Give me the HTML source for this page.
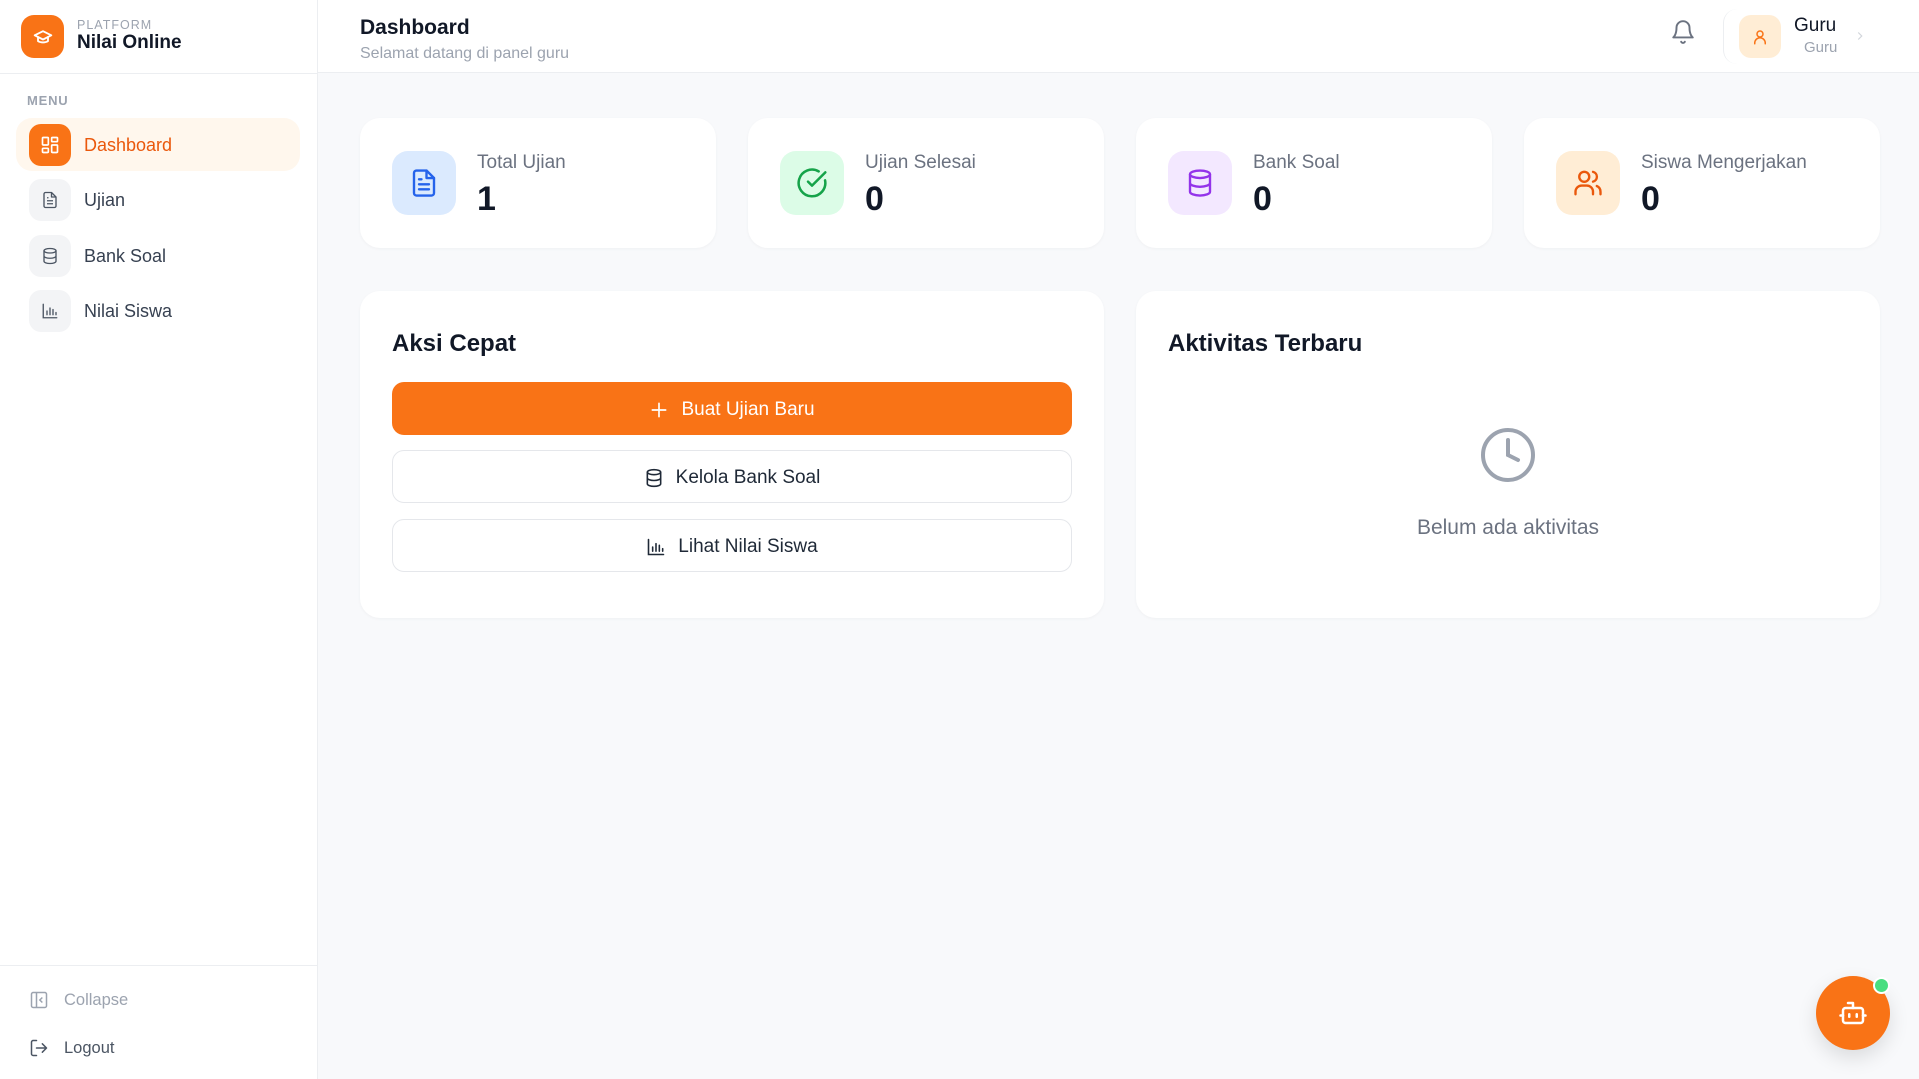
<!DOCTYPE html>
<html><head><meta charset="utf-8">
<style>
*{box-sizing:border-box;margin:0;padding:0}
body{width:1919px;height:1079px;overflow:hidden;background:#f8f9fb;font-family:"Liberation Sans",sans-serif;color:#111827;position:relative}
.abs{position:absolute}
.side{left:0;top:0;width:318px;height:1079px;background:#fff;border-right:1px solid #eceef1}
.hdr{left:318px;top:0;right:0;height:73px;background:#fff;border-bottom:1px solid #eceef1}
.card{background:#fff;border-radius:20px;box-shadow:0 1px 3px rgba(0,0,0,.04)}
.ib{width:42px;height:42px;border-radius:12px;background:#f3f4f6;display:flex;align-items:center;justify-content:center}
.nav{position:absolute;left:29px;display:flex;align-items:center;font-size:18px;color:#374151}
.nav .ib{margin-right:13px}
.stat .ico{position:absolute;left:32px;top:33px;width:64px;height:64px;border-radius:16px;display:flex;align-items:center;justify-content:center}
.stat .lbl{position:absolute;left:117px;top:34px;font-size:19px;color:#6b7280}
.stat .num{position:absolute;left:117px;top:62px;font-size:34px;font-weight:bold;color:#111827}
.btn{position:absolute;left:32px;width:680px;height:53px;border-radius:12px;display:flex;align-items:center;justify-content:center;font-size:19px;gap:12px;padding-top:2px}
.ob{background:#fff;border:1px solid #e5e7eb;color:#1f2937}
</style></head><body>
<div class="abs side">
  <div class="abs" style="left:0;top:73px;width:317px;border-top:1px solid #eceef1"></div>
  <div class="abs" style="left:21px;top:15px;width:43px;height:43px;border-radius:13px;background:#f97316;display:flex;align-items:center;justify-content:center">
    <svg width="20" height="20" viewBox="0 0 24 24" fill="none" stroke="#fff" stroke-width="2.2" stroke-linecap="round" stroke-linejoin="round"><path d="M2 10l10-5 10 5-10 5z"/><path d="M6 12v5c3 2 9 2 12 0v-5"/></svg>
  </div>
  <div class="abs" style="left:77px;top:18px;font-size:12.5px;letter-spacing:1px;color:#9ca3af">PLATFORM</div>
  <div class="abs" style="left:77px;top:32px;font-size:19px;font-weight:bold;color:#111827">Nilai Online</div>
  <div class="abs" style="left:27px;top:93px;font-size:13px;font-weight:bold;letter-spacing:.8px;color:#9ca3af">MENU</div>
  <div class="abs" style="left:16px;top:118px;width:284px;height:53px;border-radius:16px;background:#fff7ed"></div>
  <div class="nav" style="top:124px;color:#ea580c">
    <div class="ib" style="background:#f97316"><svg width="20" height="20" viewBox="0 0 24 24" fill="none" stroke="#fff" stroke-width="2"><rect x="3" y="3" width="7" height="9" rx="1"/><rect x="14" y="3" width="7" height="5" rx="1"/><rect x="14" y="12" width="7" height="9" rx="1"/><rect x="3" y="16" width="7" height="5" rx="1"/></svg></div>Dashboard</div>
  <div class="nav" style="top:179px"><div class="ib"><svg width="18" height="18" viewBox="0 0 24 24" fill="none" stroke="#4b5563" stroke-width="1.8" stroke-linejoin="round"><path d="M14 2H6a2 2 0 0 0-2 2v16a2 2 0 0 0 2 2h12a2 2 0 0 0 2-2V8z"/><path d="M14 2v6h6M8 13h8M8 17h8M8 9h2"/></svg></div>Ujian</div>
  <div class="nav" style="top:235px"><div class="ib"><svg width="18" height="18" viewBox="0 0 24 24" fill="none" stroke="#4b5563" stroke-width="1.8"><ellipse cx="12" cy="5" rx="8" ry="3"/><path d="M4 5v14c0 1.7 3.6 3 8 3s8-1.3 8-3V5M4 12c0 1.7 3.6 3 8 3s8-1.3 8-3"/></svg></div>Bank Soal</div>
  <div class="nav" style="top:290px"><div class="ib"><svg width="18" height="18" viewBox="0 0 24 24" fill="none" stroke="#4b5563" stroke-width="1.8" stroke-linecap="round"><path d="M3 3v18h18M8 17v-5M12 17V8M16 17v-7M20 17v-3"/></svg></div>Nilai Siswa</div>
  <div class="abs" style="left:0;top:965px;width:317px;border-top:1px solid #eceef1"></div>
  <div class="abs" style="left:29px;top:990px;display:flex;align-items:center;font-size:16.5px;color:#9ca3af"><svg width="20" height="20" viewBox="0 0 24 24" fill="none" stroke="#9ca3af" stroke-width="1.8" style="margin-right:15px"><rect x="3" y="3" width="18" height="18" rx="2"/><path d="M9 3v18M16 9l-3 3 3 3"/></svg>Collapse</div>
  <div class="abs" style="left:29px;top:1038px;display:flex;align-items:center;font-size:16.5px;color:#4b5563"><svg width="20" height="20" viewBox="0 0 24 24" fill="none" stroke="#4b5563" stroke-width="1.8" stroke-linecap="round" stroke-linejoin="round" style="margin-right:15px"><path d="M9 21H5a2 2 0 0 1-2-2V5a2 2 0 0 1 2-2h4M16 17l5-5-5-5M21 12H9"/></svg>Logout</div>
</div>
<div class="abs hdr">
  <div class="abs" style="left:42px;top:16px;font-size:21px;font-weight:bold">Dashboard</div>
  <div class="abs" style="left:42px;top:45px;font-size:16px;color:#9ca3af">Selamat datang di panel guru</div>
  <svg class="abs" style="left:1352px;top:19px" width="26" height="26" viewBox="0 0 24 24" fill="none" stroke="#6b7280" stroke-width="1.8" stroke-linecap="round" stroke-linejoin="round"><path d="M6 8a6 6 0 0 1 12 0c0 7 3 9 3 9H3s3-2 3-9M10.3 21a1.9 1.9 0 0 0 3.4 0"/></svg>
  <div class="abs" style="left:1405px;top:9px;width:40px;height:55px;border-left:1px solid #eceef1;border-radius:14px 0 0 14px"></div>
  <div class="abs" style="left:1421px;top:15px;width:42px;height:43px;border-radius:12px;background:#ffedd5;display:flex;align-items:center;justify-content:center"><svg width="18" height="18" viewBox="0 0 24 24" fill="none" stroke="#f97316" stroke-width="2" stroke-linecap="round"><circle cx="12" cy="8" r="4"/><path d="M5 21v-1a7 7 0 0 1 14 0v1"/></svg></div>
  <div class="abs" style="left:1476px;top:15px;font-size:19px;color:#111827">Guru</div>
  <div class="abs" style="left:1486px;top:39px;font-size:15px;color:#9ca3af">Guru</div>
  <svg class="abs" style="left:1535px;top:28px" width="14" height="16" viewBox="0 0 24 24" fill="none" stroke="#d1d5db" stroke-width="2"><path d="M9 6l6 6-6 6"/></svg>
</div>

<div class="abs card stat" style="left:360px;top:118px;width:356px;height:130px">
  <div class="ico" style="background:#dbeafe"><svg width="30" height="30" viewBox="0 0 24 24" fill="none" stroke="#2563eb" stroke-width="1.9" stroke-linejoin="round" stroke-linecap="round"><path d="M14 2H6a2 2 0 0 0-2 2v16a2 2 0 0 0 2 2h12a2 2 0 0 0 2-2V8z"/><path d="M14 2v6h6M8 13h8M8 17h8M8 9h2"/></svg></div>
  <div class="lbl">Total Ujian</div><div class="num">1</div></div>
<div class="abs card stat" style="left:748px;top:118px;width:356px;height:130px">
  <div class="ico" style="background:#dcfce7"><svg width="32" height="32" viewBox="0 0 24 24" fill="none" stroke="#16a34a" stroke-width="1.9" stroke-linecap="round" stroke-linejoin="round"><path d="M21.8 10A10 10 0 1 1 17 3.3"/><path d="M9 11l3 3L22 4"/></svg></div>
  <div class="lbl">Ujian Selesai</div><div class="num">0</div></div>
<div class="abs card stat" style="left:1136px;top:118px;width:356px;height:130px">
  <div class="ico" style="background:#f3e8ff"><svg width="30" height="30" viewBox="0 0 24 24" fill="none" stroke="#9333ea" stroke-width="1.9"><ellipse cx="12" cy="5" rx="8" ry="3"/><path d="M4 5v14c0 1.7 3.6 3 8 3s8-1.3 8-3V5M4 12c0 1.7 3.6 3 8 3s8-1.3 8-3"/></svg></div>
  <div class="lbl">Bank Soal</div><div class="num">0</div></div>
<div class="abs card stat" style="left:1524px;top:118px;width:356px;height:130px">
  <div class="ico" style="background:#ffedd5"><svg width="30" height="30" viewBox="0 0 24 24" fill="none" stroke="#ea580c" stroke-width="1.9" stroke-linecap="round"><circle cx="9" cy="7" r="4"/><path d="M2 21v-2a5 5 0 0 1 5-5h4a5 5 0 0 1 5 5v2M16 3.1a4 4 0 0 1 0 7.8M22 21v-2a5 5 0 0 0-3-4.6"/></svg></div>
  <div class="lbl">Siswa Mengerjakan</div><div class="num">0</div></div>

<div class="abs card" style="left:360px;top:291px;width:744px;height:327px">
  <div class="abs" style="left:32px;top:39px;font-size:24px;font-weight:bold">Aksi Cepat</div>
  <div class="btn" style="top:91px;background:#f97316;color:#fff"><svg width="20" height="20" viewBox="0 0 24 24" fill="none" stroke="#fff" stroke-width="2" stroke-linecap="round"><path d="M12 4v16M4 12h16"/></svg>Buat Ujian Baru</div>
  <div class="btn ob" style="top:159px"><svg width="20" height="20" viewBox="0 0 24 24" fill="none" stroke="#1f2937" stroke-width="1.9"><ellipse cx="12" cy="5" rx="8" ry="3"/><path d="M4 5v14c0 1.7 3.6 3 8 3s8-1.3 8-3V5M4 12c0 1.7 3.6 3 8 3s8-1.3 8-3"/></svg>Kelola Bank Soal</div>
  <div class="btn ob" style="top:228px"><svg width="20" height="20" viewBox="0 0 24 24" fill="none" stroke="#1f2937" stroke-width="1.9" stroke-linecap="round"><path d="M3 3v18h18M8 17v-5M12 17V8M16 17v-7M20 17v-3"/></svg>Lihat Nilai Siswa</div>
</div>
<div class="abs card" style="left:1136px;top:291px;width:744px;height:327px">
  <div class="abs" style="left:32px;top:39px;font-size:24px;font-weight:bold">Aktivitas Terbaru</div>
  <svg class="abs" style="left:342px;top:134px" width="60" height="60" viewBox="0 0 24 24" fill="none" stroke="#9ca3af" stroke-width="1.6" stroke-linecap="round"><circle cx="12" cy="12" r="10"/><path d="M12 6v6l4 2"/></svg>
  <div class="abs" style="left:0;width:744px;top:225px;text-align:center;font-size:21px;color:#6b7280">Belum ada aktivitas</div>
</div>

<div class="abs" style="left:1816px;top:976px;width:74px;height:74px;border-radius:50%;background:#f97316;box-shadow:0 8px 20px rgba(0,0,0,.12);display:flex;align-items:center;justify-content:center">
  <svg width="30" height="30" viewBox="0 0 24 24" fill="none" stroke="#fff" stroke-width="2" stroke-linecap="round" stroke-linejoin="round"><path d="M12 8V4H8"/><rect x="4" y="8" width="16" height="12" rx="2"/><path d="M2 14h2M20 14h2M15 13v2M9 13v2"/></svg>
</div>
<div class="abs" style="left:1873px;top:977px;width:17px;height:17px;border-radius:50%;background:#4ade80;border:2px solid #fff"></div>
</body></html>
